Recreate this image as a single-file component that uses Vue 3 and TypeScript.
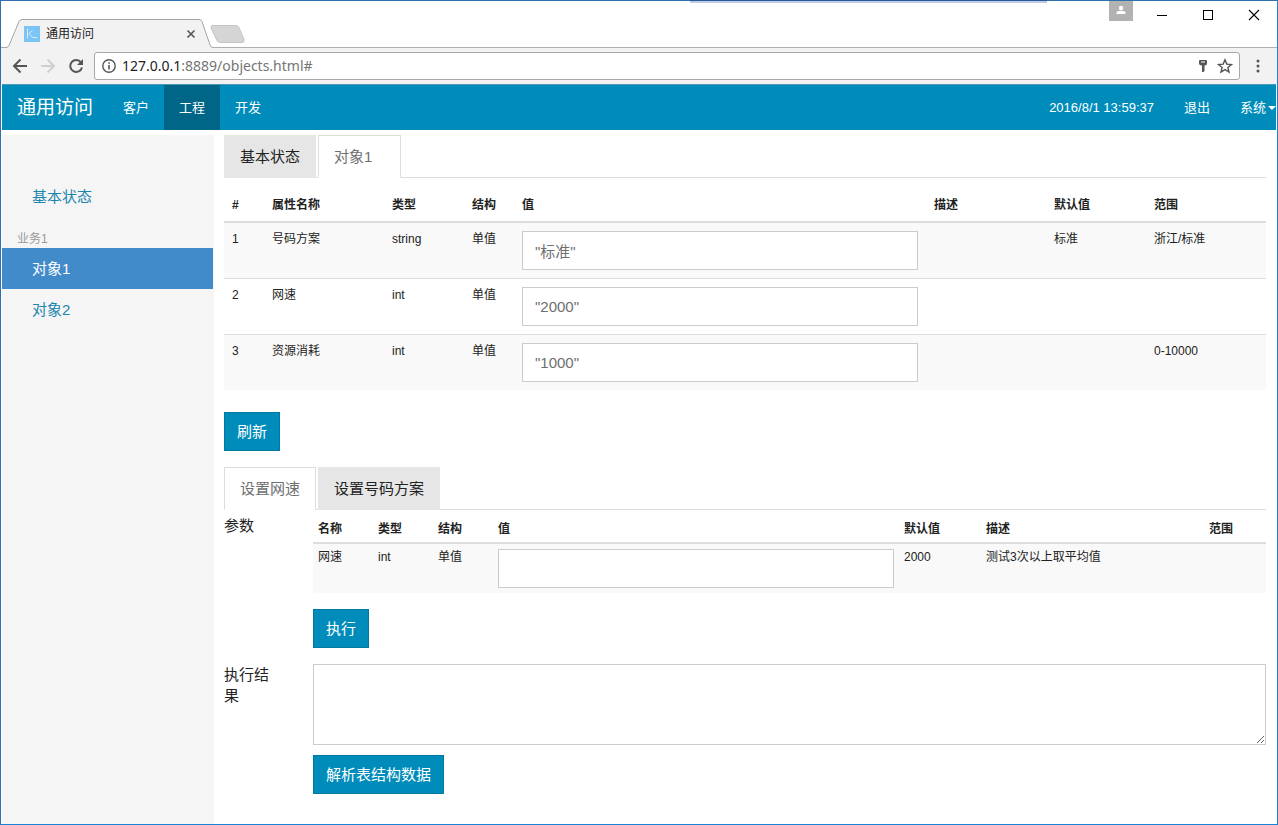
<script setup lang="ts">
import { ref } from 'vue'

interface Attribute {
  id: number
  name: string
  type: string
  structure: string
  value: string
  description: string
  fallback: string
  range: string
}

const attributes = ref<Attribute[]>([
  { id: 1, name: '号码方案', type: 'string', structure: '单值', value: '"标准"', description: '', fallback: '标准', range: '浙江/标准' },
  { id: 2, name: '网速', type: 'int', structure: '单值', value: '"2000"', description: '', fallback: '', range: '' },
  { id: 3, name: '资源消耗', type: 'int', structure: '单值', value: '"1000"', description: '', fallback: '', range: '0-10000' },
])

const navLinks = ['客户', '工程', '开发']
const activeNav = ref('工程')
const objectTabs = ['基本状态', '对象1']
const activeObject = ref('对象1')
const methodTabs = ['设置网速', '设置号码方案']
const activeMethod = ref('设置网速')
const address = ref('')
const speed = ref('')
const result = ref('')
</script>

<template>
  <div class="window">
    <div class="top-glow"></div>
    <header class="titlebar">
      <div class="browser-tab">
        <svg class="tab-shape" viewBox="0 0 212 30" width="212" height="30" aria-hidden="true">
          <path d="M0 28.5H5Q7 28.5 8 26.5L18 2.5Q19 .5 21 .5H198Q200 .5 201 2.5L209 26Q210 28.5 212 28.5V30H0Z" fill="#f2f2f2" />
          <path d="M0 28.5H5Q7 28.5 8 26.5L18 2.5Q19 .5 21 .5H198Q200 .5 201 2.5L209 26Q210 28.5 212 28.5" fill="none" stroke="#a5a5a5" />
        </svg>
        <svg class="favicon" viewBox="0 0 16 16" width="16" height="16" aria-hidden="true">
          <rect width="16" height="16" fill="#7cc4f5" />
          <path d="M3.5 2.5V12.5M4.5 8L8.5 4.5M5.500 8L8.5 11.5H13" fill="none" stroke="#d6edfc" />
        </svg>
        <span class="tab-title">通用访问</span>
        <button class="icon-button tab-close" aria-label="关闭标签页">
          <svg viewBox="0 0 10 10" width="10" height="10"><path d="M1.500 1.500L8.500 8.500M8.500 1.500L1.500 8.500" stroke="#5a5a5a" stroke-width="1.700" /></svg>
        </button>
      </div>
      <button class="icon-button new-tab" aria-label="新标签页">
        <svg viewBox="0 0 36 18" width="36" height="18"><path d="M3 .5H26Q28 .5 29 2.500L34 14.500Q35 17 32 17.500H10Q8 17.500 7 15.500L1 3Q.5 .5 3 .5Z" fill="#d5d5d5" stroke="#c4c4c4" /></svg>
      </button>
      <div class="window-controls">
        <button class="icon-button profile" aria-label="用户">
          <svg viewBox="0 0 24 20" width="24" height="20"><rect width="24" height="20" fill="#b2b2b2" /><circle cx="12" cy="7" r="2.200" fill="#fff" /><path d="M7.500 13V12Q7.500 9.800 12 9.800T16.500 12V13Z" fill="#fff" /></svg>
        </button>
        <button class="icon-button control" aria-label="最小化">
          <svg viewBox="0 0 12 12" width="12" height="12"><path d="M1 6.500H11" stroke="#000" /></svg>
        </button>
        <button class="icon-button control" aria-label="最大化">
          <svg viewBox="0 0 12 12" width="12" height="12"><rect x="1.500" y="1.500" width="9" height="9" fill="none" stroke="#000" /></svg>
        </button>
        <button class="icon-button control" aria-label="关闭">
          <svg viewBox="0 0 12 12" width="12" height="12"><path d="M1 1L11 11M11 1L1 11" stroke="#000" stroke-width="1.100" /></svg>
        </button>
      </div>
    </header>

    <div class="toolbar">
      <button class="icon-button" aria-label="后退">
        <svg viewBox="0 0 16 16" width="16" height="16"><path d="M15 8H2M8.500 1.500L2 8L8.500 14.500" fill="none" stroke="#555" stroke-width="2" /></svg>
      </button>
      <button class="icon-button" aria-label="前进" disabled>
        <svg viewBox="0 0 16 16" width="16" height="16"><path d="M1 8H14M7.500 1.500L14 8L7.500 14.500" fill="none" stroke="#d0d0d0" stroke-width="2" /></svg>
      </button>
      <button class="icon-button" aria-label="重新加载">
        <svg viewBox="0 0 16 16" width="16" height="16"><path d="M13 4.300A6 6 0 1 0 14 9.500" fill="none" stroke="#555" stroke-width="2" /><path d="M15 1V7H9Z" fill="#555" /></svg>
      </button>
      <label class="omnibox">
        <svg viewBox="0 0 16 16" width="16" height="16" aria-hidden="true"><circle cx="8" cy="8" r="6.200" fill="none" stroke="#555" stroke-width="1.400" /><path d="M8 7V11.500M8 4.200V5.800" stroke="#555" stroke-width="1.600" /></svg>
        <span class="url"><span class="host">127.0.0.1</span>:8889/objects.html#</span>
        <input v-model="address" class="url-input" type="text" aria-label="地址栏" />
        <svg viewBox="0 0 16 16" width="16" height="16" aria-hidden="true"><path d="M5 2H11Q12 2 12 3V5Q12 7.500 9.500 7.500V13L8.500 14H7V7.500Q4 7.500 4 5V3Q4 2 5 2Z" fill="#555" /><path d="M6 4H10" stroke="#fff" /></svg>
        <svg class="star" viewBox="0 0 16 16" width="16" height="16" aria-hidden="true"><path d="M8 1.800L9.800 6.100L14.500 6.500L10.900 9.500L12 14L8 11.600L4 14L5.100 9.500L1.500 6.500L6.200 6.100Z" fill="none" stroke="#555" stroke-width="1.400" /></svg>
      </label>
      <button class="icon-button menu" aria-label="菜单">
        <svg viewBox="0 0 4 16" width="4" height="16"><circle cx="2" cy="3" r="1.500" fill="#555" /><circle cx="2" cy="8" r="1.500" fill="#555" /><circle cx="2" cy="13" r="1.500" fill="#555" /></svg>
      </button>
    </div>

    <nav class="navbar">
      <a class="brand" href="#">通用访问</a>
      <a v-for="link in navLinks" :key="link" class="nav-link" :class="{ active: link === activeNav }" href="#" @click.prevent="activeNav = link">{{ link }}</a>
      <span class="clock">2016/8/1 13:59:37</span>
      <a class="nav-link" href="#">退出</a>
      <a class="nav-link dropdown" href="#">系统<span class="caret"></span></a>
    </nav>

    <div class="body">
      <aside class="sidebar">
        <a class="side-link" href="#">基本状态</a>
        <div class="side-heading">业务1</div>
        <a class="side-link active" href="#">对象1</a>
        <a class="side-link" href="#">对象2</a>
      </aside>

      <main class="content">
        <div class="tabs" role="tablist">
          <button v-for="tab in objectTabs" :key="tab" class="tab" :class="{ active: tab === activeObject, closable: tab === '对象1' }" role="tab" :aria-selected="tab === activeObject" @click="activeObject = tab">{{ tab }}</button>
        </div>

        <table class="grid attributes">
          <colgroup><col class="w40" /><col class="w120" /><col class="w80" /><col class="w50" /><col /><col class="w120" /><col class="w100" /><col class="w120" /></colgroup>
          <thead>
            <tr><th>#</th><th>属性名称</th><th>类型</th><th>结构</th><th>值</th><th>描述</th><th>默认值</th><th>范围</th></tr>
          </thead>
          <tbody>
            <tr v-for="row in attributes" :key="row.id">
              <td>{{ row.id }}</td>
              <td>{{ row.name }}</td>
              <td>{{ row.type }}</td>
              <td>{{ row.structure }}</td>
              <td><input v-model="row.value" class="field" type="text" :aria-label="row.name" /></td>
              <td>{{ row.description }}</td>
              <td>{{ row.fallback }}</td>
              <td>{{ row.range }}</td>
            </tr>
          </tbody>
        </table>

        <button class="button">刷新</button>

        <div class="tabs" role="tablist">
          <button v-for="tab in methodTabs" :key="tab" class="tab" :class="{ active: tab === activeMethod }" role="tab" :aria-selected="tab === activeMethod" @click="activeMethod = tab">{{ tab }}</button>
        </div>

        <div class="form">
          <div class="form-label">参数</div>
          <div class="form-cell">
            <table class="grid params">
              <colgroup><col class="w60" /><col class="w60" /><col class="w60" /><col /><col class="w82" /><col class="w223" /><col class="w62" /></colgroup>
              <thead>
                <tr><th>名称</th><th>类型</th><th>结构</th><th>值</th><th>默认值</th><th>描述</th><th>范围</th></tr>
              </thead>
              <tbody>
                <tr>
                  <td>网速</td>
                  <td>int</td>
                  <td>单值</td>
                  <td><input v-model="speed" class="field" type="text" aria-label="网速参数" /></td>
                  <td>2000</td>
                  <td>测试3次以上取平均值</td>
                  <td></td>
                </tr>
              </tbody>
            </table>
            <button class="button run">执行</button>
          </div>
          <label class="form-label" for="result">执行结果</label>
          <div class="form-cell">
            <textarea id="result" v-model="result" class="result"></textarea>
            <button class="button">解析表结构数据</button>
          </div>
        </div>
      </main>
    </div>
  </div>
</template>

<style>
body {
  margin: 0;
  background: #fff;
}
</style>

<style scoped>
.window {
  position: relative;
  display: flex;
  flex-direction: column;
  box-sizing: border-box;
  min-height: 100vh;
  border: 1px solid #1883d7;
  border-top-color: #3070ad;
  border-left-color: #3070ad;
  background: #fff;
  color: #222;
  font-family: "Liberation Sans", "Noto Sans CJK SC", sans-serif;
  font-size: 15px;
}

.window *,
.window *::before {
  box-sizing: border-box;
}

.window svg {
  display: block;
  flex: none;
}

.window a {
  text-decoration: none;
}

.icon-button {
  display: flex;
  padding: 0;
  border: 0;
  background: none;
}

.top-glow {
  position: absolute;
  top: -1px;
  left: 54%;
  width: 28%;
  height: 3px;
  border-top: 1px solid #2b5797;
  background: #bccbe6;
}

.titlebar {
  display: flex;
  align-items: flex-end;
  height: 47px;
  border-bottom: 1px solid #b0b0b0;
}

.browser-tab {
  position: relative;
  display: flex;
  align-items: center;
  width: 212px;
  height: 29px;
  margin-bottom: -1px;
  padding: 0 17px 0 23px;
}

.tab-shape {
  position: absolute;
  top: 0;
  left: 0;
}

.favicon,
.tab-title,
.tab-close {
  position: relative;
}

.tab-title {
  flex: 1;
  margin-left: 6px;
  font-size: 12px;
  line-height: 16px;
}

.new-tab {
  margin: 0 0 4px -3px;
}

.window-controls {
  display: flex;
  align-self: flex-start;
  margin-left: auto;
}

.control {
  align-items: center;
  justify-content: center;
  width: 46px;
  height: 28px;
}

.profile {
  margin-right: 6px;
}

.toolbar {
  display: flex;
  align-items: center;
  gap: 12px;
  height: 36px;
  padding: 0 13px 0 11px;
  background: #f2f2f2;
}

.omnibox {
  display: flex;
  flex: 1;
  align-items: center;
  height: 28px;
  margin-left: -2px;
  padding: 0 6px;
  border: 1px solid #a8a8a8;
  border-radius: 3px;
  background: #fff;
}

.url {
  margin-left: 5px;
  color: #757575;
  font-family: "Noto Sans", sans-serif;
  font-size: 14px;
  line-height: 20px;
}

.host {
  color: #222;
}

.url-input {
  flex: 1;
  min-width: 0;
  border: 0;
  outline: 0;
  background: transparent;
}

.star {
  margin-left: 6px;
}

.menu {
  margin: 0 4px;
}

.navbar {
  display: flex;
  align-items: center;
  height: 46px;
  margin: 0 1px;
  border-top: 1px solid #4a9ab5;
  background: #008cba;
  color: #fff;
  font-size: 13px;
  line-height: 45px;
}

.brand {
  padding: 0 15px;
  color: #fff;
  font-size: 19px;
}

.nav-link {
  padding: 0 15px;
  color: #fff;
}

.nav-link.active {
  background: #006687;
}

.clock {
  margin-left: auto;
  padding: 0 15px;
}

.dropdown {
  display: flex;
  align-items: center;
  padding-right: 0;
}

.caret {
  margin-left: 2px;
  border: 4px solid transparent;
  border-top-color: #fff;
  border-bottom: 0;
}

.body {
  display: flex;
  flex: 1;
  margin: 5px 1px 0;
}

.sidebar {
  flex: none;
  width: 212px;
  padding: 41px 1px 0 0;
  background: #f5f5f5;
}

.side-link {
  display: block;
  padding: 10px 30px;
  color: #1c86ad;
  line-height: 21px;
}

.side-link.active {
  background: #428bca;
  color: #fff;
}

.side-heading {
  padding: 13px 15px 0;
  color: #999;
  font-size: 12px;
  line-height: 18px;
}

.content {
  flex: 1;
  min-width: 0;
  padding: 0 10px 30px;
}

.tabs {
  display: flex;
  gap: 2px;
  height: 43px;
  border-bottom: 1px solid #ddd;
}

.tab {
  height: 43px;
  padding: 0 15px;
  border: 1px solid #e6e6e6;
  background: #e6e6e6;
  color: #222;
  font: inherit;
  line-height: 21px;
}

.tab.active {
  border-color: #ddd;
  border-bottom-color: #fff;
  background: #fff;
  color: #6f6f6f;
}

.tab.closable {
  padding-right: 28px;
}

.grid {
  width: 100%;
  border-spacing: 0;
  table-layout: fixed;
  font-size: 12px;
  line-height: 17px;
}

.grid th,
.grid td {
  padding: 8px;
  text-align: left;
  vertical-align: top;
}

.grid th {
  padding: 9px 8px 7px;
  border-bottom: 2px solid #ddd;
}

.grid tbody tr:nth-child(odd) {
  background: #f9f9f9;
}

.grid tbody tr + tr td {
  border-top: 1px solid #ddd;
}

.attributes {
  margin: 10px 0 22px;
}

.params th {
  padding: 6px 5px 4px;
}

.params td {
  padding: 5px;
}

.w40 { width: 40px; }
.w50 { width: 50px; }
.w60 { width: 60px; }
.w62 { width: 62px; }
.w80 { width: 80px; }
.w82 { width: 82px; }
.w100 { width: 100px; }
.w120 { width: 120px; }
.w223 { width: 223px; }

.field {
  display: block;
  width: 100%;
  height: 39px;
  padding: 8px 12px;
  border: 1px solid #ccc;
  background: #fff;
  color: #6f6f6f;
  font: inherit;
  font-size: 15px;
}

.button {
  display: block;
  height: 39px;
  padding: 0 12px;
  border: 1px solid #0079a1;
  background: #008cba;
  color: #fff;
  font: inherit;
  line-height: 21px;
}

.button + .tabs {
  margin-top: 16px;
}

.form {
  display: grid;
  grid-template-columns: 59px 1fr;
  gap: 16px 30px;
  padding-top: 5px;
}

.form-label {
  width: 50px;
  line-height: 21px;
}

.run {
  margin-top: 16px;
}

.result {
  display: block;
  width: 100%;
  height: 81px;
  margin-bottom: 10px;
  padding: 8px 12px;
  border: 1px solid #ccc;
  color: #6f6f6f;
  font: inherit;
}
</style>
